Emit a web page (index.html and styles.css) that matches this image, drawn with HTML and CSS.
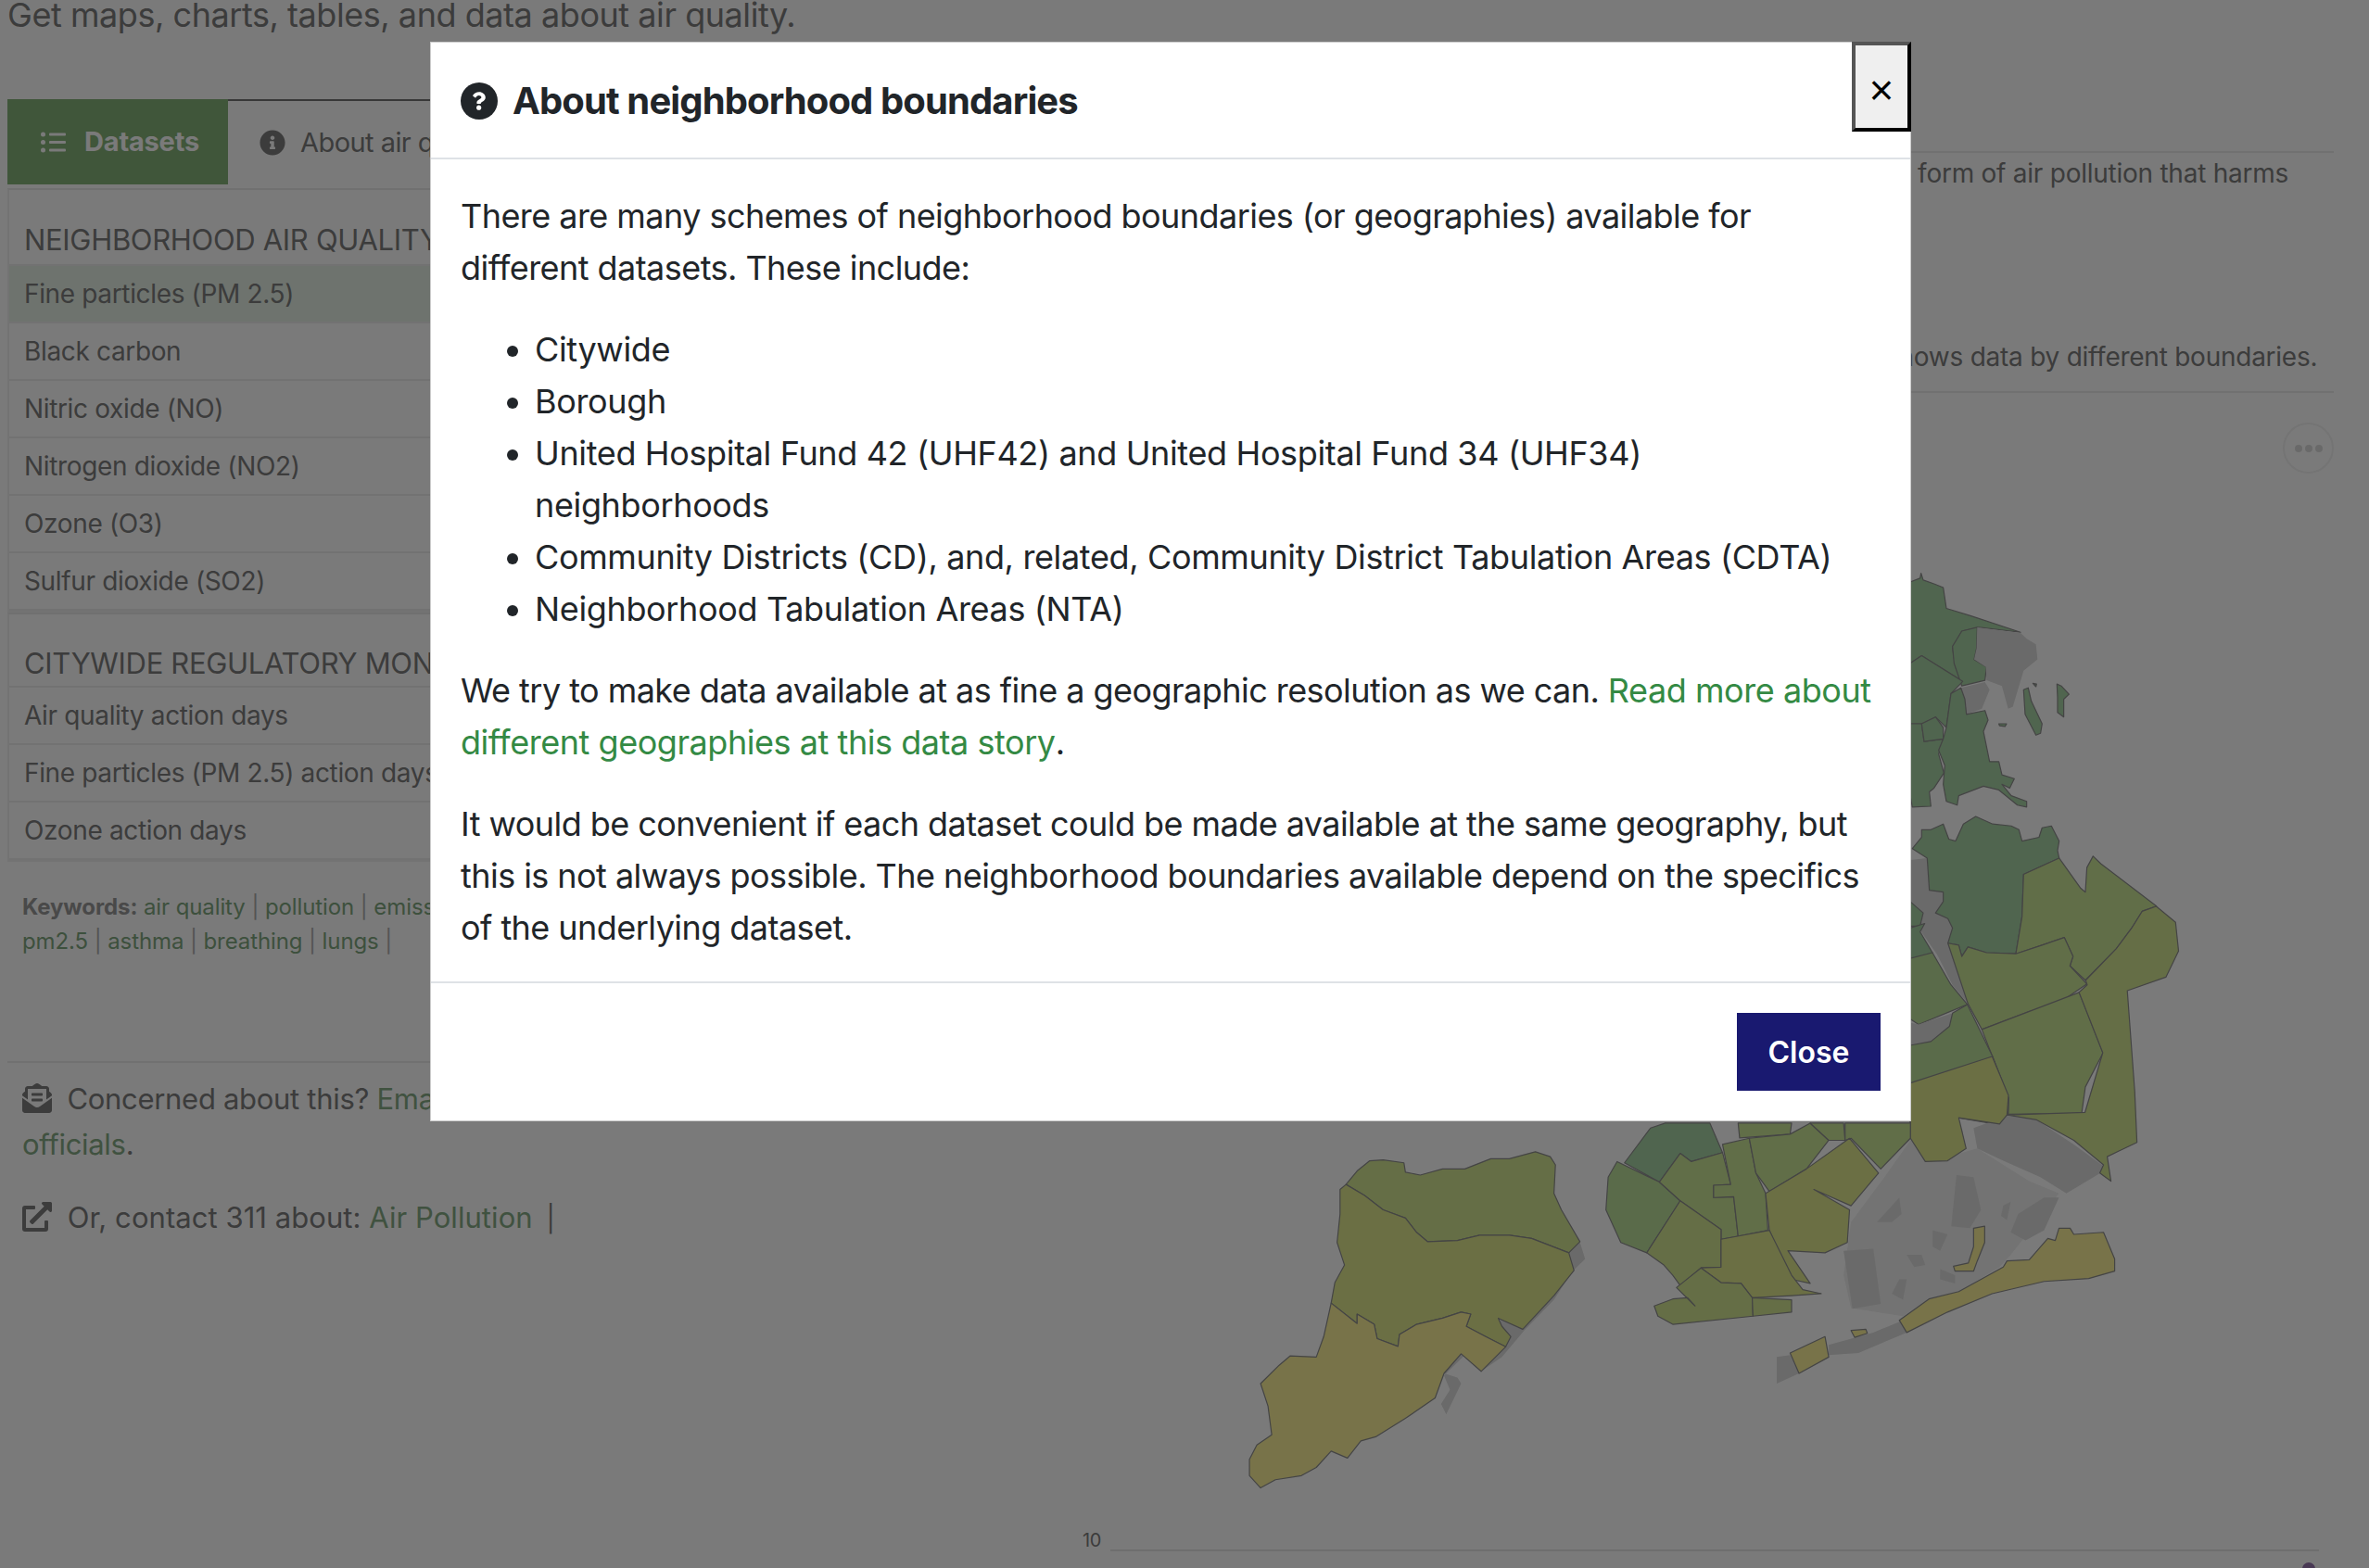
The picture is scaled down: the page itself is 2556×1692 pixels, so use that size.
FILE: index.html
```html
<!DOCTYPE html>
<html lang="en">
<head>
  <meta charset="UTF-8">
  <title>Air quality data</title>
  <link rel="stylesheet" href="styles.css">
</head>
<body>
  <div class="page">
    <p class="intro">Get maps, charts, tables, and data about air quality.</p>

    <div class="columns">
      <div class="side">
        <!-- tabs -->
        <div class="tabs">
          <div class="tab tab-active">
            <svg class="tab-list-icon" viewBox="0 0 27 23"><circle cx="2.5" cy="3" r="2.5"/><circle cx="2.5" cy="11.5" r="2.5"/><circle cx="2.5" cy="20" r="2.5"/><rect x="9" y="1.5" width="18" height="3" rx="1"/><rect x="9" y="10" width="18" height="3" rx="1"/><rect x="9" y="18.5" width="18" height="3" rx="1"/></svg>
            Datasets
          </div>
          <div class="tab">
            <svg class="tab-info-icon" viewBox="0 0 512 512"><path d="M256 8C119.043 8 8 119.083 8 256c0 136.997 111.043 248 248 248s248-111.003 248-248C504 119.083 392.957 8 256 8zm0 110c23.196 0 42 18.804 42 42s-18.804 42-42 42-42-18.804-42-42 18.804-42 42-42zm56 254c0 6.627-5.373 12-12 12h-88c-6.627 0-12-5.373-12-12v-24c0-6.627 5.373-12 12-12h12v-64h-12c-6.627 0-12-5.373-12-12v-24c0-6.627 5.373-12 12-12h64c6.627 0 12 5.373 12 12v100h12c6.627 0 12 5.373 12 12v24z"/></svg>
            About air quality
          </div>
        </div>

        <!-- dataset lists -->
        <div class="panel">
          <h5 class="panel-title">NEIGHBORHOOD AIR QUALITY</h5>
          <div class="row row-active">Fine particles (PM 2.5)</div>
          <div class="row">Black carbon</div>
          <div class="row">Nitric oxide (NO)</div>
          <div class="row">Nitrogen dioxide (NO2)</div>
          <div class="row">Ozone (O3)</div>
          <div class="row">Sulfur dioxide (SO2)</div>
        </div>
        <div class="panel panel-second">
          <h5 class="panel-title">CITYWIDE REGULATORY MONITORING</h5>
          <div class="row">Air quality action days</div>
          <div class="row">Fine particles (PM 2.5) action days</div>
          <div class="row">Ozone action days</div>
        </div>

        <p class="keywords"><b>Keywords:</b> <a>air quality</a> | <a>pollution</a> | <a>emissions</a><br><a>pm2.5</a> | <a>asthma</a> | <a>breathing</a> | <a>lungs</a> |</p>

        <hr class="side-rule">

        <p class="contact contact-first">
          <svg class="contact-icon" viewBox="0 0 512 512"><path d="M176 216h160c8.84 0 16-7.16 16-16v-16c0-8.84-7.16-16-16-16H176c-8.84 0-16 7.16-16 16v16c0 8.84 7.16 16 16 16zm-16 80c0 8.84 7.16 16 16 16h160c8.84 0 16-7.16 16-16v-16c0-8.84-7.16-16-16-16H176c-8.84 0-16 7.16-16 16v16zm96 121.13c-16.42 0-32.84-5.06-46.86-15.19L0 250.86V464c0 26.51 21.49 48 48 48h416c26.51 0 48-21.49 48-48V250.86L302.86 401.94c-14.02 10.12-30.44 15.19-46.86 15.19zm237.61-254.18c-8.85-6.94-17.24-13.47-29.61-22.81V96c0-26.51-21.49-48-48-48h-77.55c-3.04-2.2-5.87-4.26-9.04-6.56C312.6 29.17 279.2-.35 256 0c-23.2-.35-56.59 29.17-73.41 41.44-3.17 2.3-6 4.36-9.04 6.56H96c-26.51 0-48 21.49-48 48v44.14c-12.37 9.33-20.76 15.87-29.61 22.81A47.995 47.995 0 0 0 0 200.72v10.65l96 69.35V96h320v184.72l96-69.35v-10.65c0-14.74-6.78-28.67-18.39-37.77z"/></svg>
          Concerned about this? <a>Email your elected officials</a>.
        </p>
        <p class="contact contact-second">
          <svg class="contact-icon" viewBox="0 0 512 512"><path d="M432 320h-32a16 16 0 0 0-16 16v112H64V128h144a16 16 0 0 0 16-16V80a16 16 0 0 0-16-16H48a48 48 0 0 0-48 48v352a48 48 0 0 0 48 48h352a48 48 0 0 0 48-48V336a16 16 0 0 0-16-16zM488 0h-128c-21.37 0-32.05 25.91-17 41l35.73 35.73L135 320.37a24 24 0 0 0 0 34L157.67 377a24 24 0 0 0 34 0l243.61-243.68L471 169c15 15 41 4.5 41-17V24a24 24 0 0 0-24-24z"/></svg>
          Or, contact 311 about: <a>Air Pollution</a> <span class="contact-bar">|</span>
        </p>
      </div>

      <div class="main">
        <hr class="main-rule">
        <p class="blurb blurb-first">a form of air pollution that harms</p>
        <p class="blurb blurb-second">shows data by different boundaries.</p>
        <hr class="main-rule">
        <div class="more"><span></span><span></span><span></span></div>

        <!-- map, coordinates are page pixels -->
        <svg class="chart" viewBox="1160 560 1360 1132">
          <g class="boroughs" transform="translate(1950 580) scale(.3333 .4082)">
            <path class="c1" d="M333 115L365 105 368 92 375 110 410 120 440 130 450 185 530 205 690 248 555 235 500 245 470 290 480 340 503 378 370 310 333 330Z"/>
            <path class="c1" d="M550 235L548 290 540 320 580 340 575 375 500 390 475 330 470 285 500 245Z"/>
            <path class="w1" d="M550 235L690 250 710 265 740 280 745 320 700 350 665 445 650 450 630 390 580 375 578 340 540 320 548 290Z"/>
            <path class="w1" d="M497 395L575 380 590 400 565 450 515 465 510 425Z"/>
            <path class="c1" d="M333 330L370 310 503 378 465 410 450 500 415 472 370 490 333 490Z"/>
            <path class="c1" d="M333 490L370 490 378 537 440 530 425 570 442 620 410 660 395 670 400 708 340 710 333 680Z"/>
            <path class="c1" d="M370 490L415 472 440 500 440 530 378 537Z"/>
            <path class="c1" d="M497 395L510 425 515 465 575 455 585 480 570 510 590 590 620 590 630 625 670 635 655 660 630 650 660 680 710 695 710 710 680 705 620 665 570 655 490 680 485 705 450 695 440 650 445 600 425 560 440 530 450 500 465 410Z"/>
            <path class="c1" d="M700 400L715 395 725 430 760 490 755 515 740 520 705 465Z"/>
            <path class="c1" d="M808 385L822 390 847 412 830 425 830 472 810 460 810 420Z"/>
            <path class="c1" d="M620 490L645 490 640 497 622 495Z"/>
            <path class="c1" d="M730 383L742 385 740 392Z"/>

            <path class="w1" d="M333 850L388 845 395 930 440 935 440 960 415 990 455 1005 470 1030 455 1070 520 1230 470 1180 420 1100 365 1035 375 990 333 960Z"/>
            <path class="c1" d="M340 820L370 790 370 770 400 770 440 755 458 795 480 800 505 755 545 735 600 755 660 760 685 770 695 800 750 790 760 765 790 760 815 800 810 825 815 845 700 888 695 1000 675 1098 580 1095 520 1080 500 1105 490 1075 455 1070 470 1030 455 1005 415 990 440 960 440 935 395 930 388 845Z"/>
            <path class="c3" d="M700 888L815 845 885 925 900 935 905 870 925 840 950 860 1130 972 1085 985 1050 1030 1000 1085 900 1168 850 1130 860 1105 832 1055 760 1075 675 1098 695 1000Z"/>
            <path class="c3" d="M455 1070L490 1075 500 1105 520 1080 580 1095 675 1098 760 1075 832 1055 860 1105 850 1130 905 1178 820 1225 720 1250 565 1298 520 1230Z"/>
            <path class="c3" d="M565 1298L880 1200 957 1360 900 1450 888 1520 650 1522 652 1480Z"/>
            <path class="c1" d="M333 960L375 990 365 1025 333 1025Z"/>
            <path class="c1" d="M333 1030L380 1018 365 1040 405 1095 333 1115Z"/>
            <path class="c2" d="M333 1110L405 1095 465 1180 518 1232 360 1285 333 1270Z"/>
            <path class="w1" d="M333 1280L360 1285 470 1255 460 1290 400 1330 333 1340Z"/>
            <path class="c2" d="M333 1340L400 1330 460 1290 470 1255 518 1232 600 1370 360 1442 333 1440Z"/>
            <path class="c5" d="M333 1442L360 1442 600 1370 652 1480 650 1522 620 1550 480 1530 500 1568 333 1568Z"/>
          </g>

          <g class="boroughs" transform="translate(1300 1000) scale(.8013 .4413)">
            <!-- water -->
            <path class="w2" d="M870 720L915 610 950 520 1000 560 1040 540 1110 620 1150 650 1120 720 1085 800 1070 830 1015 890 975 908 940 950 870 930 860 850Z"/>
            <path class="w1" d="M1035 490L1080 460 1120 470 1170 530 1215 590 1160 650 1125 610 1075 570 1040 540Z"/>
            <path class="w1" d="M860 790L900 785 910 920 872 932Z"/>
            <path class="w1" d="M935 660L905 720 925 720 938 700Z"/>
            <path class="w1" d="M1012 605L1035 610 1045 690 1030 735 1005 730Z"/>
            <path class="w1" d="M1095 700L1130 660 1150 660 1130 740 1105 765 1085 745Z"/>
            <path class="w1" d="M1075 680L1085 670 1080 715 1072 705Z"/>
            <path class="w1" d="M945 800L965 800 970 825 955 830Z"/>
            <path class="w1" d="M990 835L1010 850 1010 870 990 860Z"/>
            <path class="w1" d="M935 860L945 860 940 910 925 895Z"/>
            <path class="w1" d="M980 740L1000 750 990 790 980 780Z"/>
            <path class="w1" d="M940 960L945 990 880 1040 840 1045 840 1020 900 990Z"/>
            <path class="w1" d="M770 1050L788 1045 800 1090 770 1115Z"/>
            <path class="w1" d="M490 795L505 770 512 810 495 840 470 910 430 985 400 1050 372 1085 345 1042 322 1090 340 1100 345 1115 325 1190 318 1165 330 1130 322 1095Z"/>

            <!-- queens, east and south of the dialog -->
            <path class="c5" d="M950 380L1060 315 1082 410 1080 458 1070 480 1015 465 1025 540 1000 570 970 572 950 515Z"/>
            <path class="c4" d="M1281 -52L1307 -13 1311 57 1294 121 1242 154 1252 400 1255 525 1215 560 1220 620 1205 600 1210 580 1170 520 1120 470 1080 458 1185 452 1209 306 1177 158 1188 140 1186 129 1227 52 1248 1 1262 -40Z"/>

            <!-- brooklyn -->
            <path class="c1" d="M565 575L600 490 620 478 680 478 697 550 655 572 640 552 612 622Z"/>
            <path class="c2" d="M555 572L612 622 640 668 595 795 560 770 540 690 543 610Z"/>
            <path class="c3" d="M612 622L640 552 655 572 697 550 708 628 685 630 685 660 712 658 718 755 695 762 695 738 640 668Z"/>
            <path class="c3" d="M697 530L733 515 742 600 755 650 758 740 718 755 712 658 685 660 685 630 708 628Z"/>
            <path class="c4" d="M640 668L695 738 695 830 668 832 640 875 630 850 618 825 595 795Z"/>
            <path class="c3" d="M718 478L790 478 788 505 720 514Z"/>
            <path class="c3" d="M733 515L788 505 815 478 840 520 810 590 760 645 742 600Z"/>
            <path class="c3" d="M815 478L860 478 862 520 840 520Z"/>
            <path class="c3" d="M862 478L950 478 950 515 910 590 870 515 862 520Z"/>
            <path class="c5" d="M868 515L907 600 870 680 820 640 868 690 865 770 835 795 785 790 815 870 790 860 783 840 760 740 755 650 810 590Z"/>
            <path class="c5" d="M695 762L760 740 790 850 805 885 830 895 790 900 737 905 722 870 695 868 668 832 695 830Z"/>
            <path class="c4" d="M668 832L695 868 722 870 737 905 738 950 630 970 610 950 605 925 630 908 650 905 660 925 635 880Z"/>
            <path class="c4" d="M737 905L790 910 790 940 738 950Z"/>

            <!-- rockaways -->
            <path class="c6" d="M935 960L975 908 1015 890 1075 830 1080 815 1110 812 1135 760 1145 765 1150 735 1165 735 1170 750 1210 745 1225 810 1225 840 1190 858 1130 865 1060 895 1000 940 945 990Z"/>
            <path class="c6" d="M1035 735L1050 730 1050 770 1040 815 1035 840 1010 840 1008 828 1028 820 1035 780Z"/>
            <path class="c6" d="M870 985L890 982 892 992 875 1002Z"/>
            <path class="c6" d="M788 1040L835 1000 840 1050 800 1090Z"/>

            <!-- staten island -->
            <path class="c4" d="M190 628L205 595 222 570 240 568 268 575 270 598 290 605 320 590 350 590 385 565 410 565 445 548 465 560 472 580 470 650 480 690 505 768 490 795 440 760 410 752 370 752 340 765 300 768 285 745 270 710 240 690 215 655Z"/>
            <path class="c5" d="M190 628L215 655 240 690 270 710 285 745 300 768 340 765 370 752 410 752 440 760 490 795 497 838 470 900 428 982 395 955 400 975 412 1000 405 1025 378 1000 352 975 358 945 345 940 320 955 285 970 262 995 260 1024 232 1005 228 970 205 945 205 968 170 918 175 868 188 825 178 770 182 700 182 640Z"/>
            <path class="c6" d="M170 918L205 968 205 945 228 970 232 1005 260 1024 262 995 285 970 320 955 345 940 358 945 352 975 378 1000 405 1025 372 1085 345 1042 322 1090 310 1150 270 1200 230 1245 210 1255 192 1297 170 1280 150 1320 130 1340 95 1350 75 1370 60 1340 60 1300 70 1265 90 1240 85 1170 75 1115 100 1070 115 1047 150 1050 160 1000Z"/>
          </g>

          <text class="axis-label" x="1168" y="1668">10</text>
          <line class="axis" x1="1198" y1="1672" x2="2502" y2="1672"/>
          <circle class="axis-dot" cx="2491" cy="1692" r="7"/>
        </svg>
      </div>
    </div>
  </div>

  <div class="backdrop"></div>

  <div class="modal">
    <button class="modal-x" type="button">×</button>
    <div class="modal-header">
      <svg class="modal-icon" viewBox="8 8 496 496"><circle cx="256" cy="256" r="248"/><path class="modal-icon-mark" transform="translate(256 256) scale(.72) translate(-262 -260)" d="M262.655 90c-54.497 0-89.255 22.957-116.549 63.758-3.536 5.286-2.353 12.415 2.715 16.258l34.699 26.31c5.205 3.947 12.621 3.008 16.665-2.122 17.864-22.658 30.113-35.797 57.303-35.797 20.429 0 45.698 13.148 45.698 32.958 0 14.976-12.363 22.667-32.534 33.976C247.128 238.528 216 254.941 216 296v4c0 6.627 5.373 12 12 12h56c6.627 0 12-5.373 12-12v-1.333c0-28.462 83.186-29.647 83.186-106.667 0-58.002-60.165-102-116.531-102zM256 338c-25.365 0-46 20.635-46 46 0 25.364 20.635 46 46 46s46-20.636 46-46c0-25.365-20.635-46-46-46z"/></svg>
      <h4 class="modal-title">About neighborhood boundaries</h4>
    </div>
    <div class="modal-body">
      <p>There are many schemes of neighborhood boundaries (or geographies) available for different datasets. These include:</p>
      <ul>
        <li>Citywide</li>
        <li>Borough</li>
        <li>United Hospital Fund 42 (UHF42) and United Hospital Fund 34 (UHF34) neighborhoods</li>
        <li>Community Districts (CD), and, related, Community District Tabulation Areas (CDTA)</li>
        <li>Neighborhood Tabulation Areas (NTA)</li>
      </ul>
      <p>We try to make data available at as fine a geographic resolution as we can. <a>Read more about different geographies at this data story</a>.</p>
      <p>It would be convenient if each dataset could be made available at the same geography, but this is not always possible. The neighborhood boundaries available depend on the specifics of the underlying dataset.</p>
    </div>
    <div class="modal-footer">
      <button class="close-btn" type="button">Close</button>
    </div>
  </div>
</body>
</html>
```

FILE: styles.css
```css
html, body {
  height: 100%;
}

body {
  margin: 0;
  overflow: hidden;
  background-color: #fff;
  color: #7d7d7d;
  font-family: 'Inter', 'Liberation Sans', sans-serif;
  font-size: 36px;
  letter-spacing: -.32px;
  line-height: 56px;
}

p, h4, h5 {
  margin: 0;
  font-weight: normal;
}

.page {
  padding: 0 38px 0 8px;
  margin-top: -12px;
}

.intro {
  letter-spacing: -.45px;
}

.columns {
  display: grid;
  grid-template-columns: 800px 1fr;
}

/* tabs */
.tabs {
  display: flex;
  margin-top: 63px;
  width: 1200px;
  height: 92px;
  border-top: 2px solid #767676;
  box-sizing: border-box;
}

.tab {
  display: flex;
  align-items: center;
  gap: 16px;
  padding: 0 34px;
  font-size: 29px;
  letter-spacing: -.55px;
  line-height: 40px;
  white-space: nowrap;
  fill: #7d7d7d;
}

.tab-active {
  margin-top: -2px;
  gap: 20px;
  width: 238px;
  box-sizing: border-box;
  padding: 0 0 0 36px;
  background-color: #87b579;
  color: #ffffff;
  font-weight: 700;
  fill: #ffffff;
  letter-spacing: -.2px;
}

.tab-list-icon {
  width: 27px;
  height: 23px;
}

.tab-info-icon {
  width: 28px;
  height: 28px;
}

/* dataset lists */
.panel {
  width: 1200px;
  margin-top: 4px;
  border: 2px solid #f0f0f0;
  border-top-color: #eaeaea;
  box-sizing: border-box;
}

.panel + .panel {
  margin-top: 0;
}

.panel-title {
  height: 82px;
  box-sizing: border-box;
  padding: 34px 0 0 16px;
  font-size: 31px;
  line-height: 40px;
  white-space: nowrap;
  border-bottom: 2px solid #eeeeee;
}

.panel-second .panel-title {
  height: 79px;
  padding-top: 33px;
}

.row {
  height: 62px;
  box-sizing: border-box;
  padding-left: 16px;
  font-size: 28px;
  letter-spacing: -.35px;
  line-height: 60px;
  border-bottom: 2px solid #eeeeee;
  white-space: nowrap;
}

.row-active {
  background-color: #e6f0e6;
}

.keywords {
  margin-top: 30px;
  padding-left: 16px;
  width: 1000px;
  font-size: 24px;
  letter-spacing: -.1px;
  line-height: 37px;
  color: #b0b0b0;
}

.keywords b {
  color: #999;
}

.keywords a {
  color: #7fa87f;
}

.side-rule {
  width: 1000px;
  margin: 111px 0 0;
  border: 0;
  border-top: 2px solid #ececec;
}

.contact {
  width: 700px;
  padding-left: 16px;
  font-size: 31px;
  letter-spacing: -.3px;
  line-height: 49px;
  fill: #7d7d7d;
}

.contact a {
  color: #86ab86;
}

.contact-first {
  margin-top: 14px;
}

.contact-second {
  margin-top: 30px;
  letter-spacing: .06px;
}

.contact-icon {
  width: 32px;
  height: 32px;
  margin-right: 8px;
  vertical-align: -4px;
}

.contact-bar {
  margin-left: 6px;
  font-size: 28px;
}

/* right side */
.main-rule {
  margin: 119px 0 0;
  border: 0;
  border-top: 2px solid #ececec;
}

.blurb {
  font-size: 28px;
  letter-spacing: -.25px;
  line-height: 44px;
  white-space: nowrap;
}

.blurb-first {
  padding-left: 1238px;
}

.blurb-second {
  margin-top: 154px;
  padding-left: 1226px;
}

.blurb-second + .main-rule {
  margin-top: 15px;
}

.more {
  display: flex;
  align-items: center;
  justify-content: center;
  gap: 3px;
  width: 55px;
  height: 55px;
  margin: 32px 0 0 auto;
  box-sizing: border-box;
  border: 2px solid #f2f2f2;
  border-radius: 50%;
}

.more span {
  width: 8px;
  height: 8px;
  border-radius: 50%;
  background-color: #dcdcdc;
}

.chart {
  display: block;
  width: 1360px;
  height: 1132px;
  margin: 50px -2px 0 auto;
}

.boroughs path {
  stroke: #8e8e8e;
  stroke-width: 1.2px;
  vector-effect: non-scaling-stroke;
  stroke-linejoin: round;
}

.boroughs .w1 { fill: #dddddd; stroke: none; }
.boroughs .w2 { fill: #f0f0f0; stroke: none; }
.c1 { fill: #a7d3a5; }
.c2 { fill: #bcdf9c; }
.c3 { fill: #cbe597; }
.c4 { fill: #d4e792; }
.c5 { fill: #dfe98e; }
.c6 { fill: #faf09a; }

.axis-label {
  font-size: 20px;
  fill: #7d7d7d;
}

.axis {
  stroke: #e6e6e6;
  stroke-width: 2;
}

.axis-dot {
  fill: #9a78b0;
}

/* dialog */
.backdrop {
  position: fixed;
  top: 0;
  left: 0;
  right: 0;
  bottom: 0;
  background-color: rgba(0, 0, 0, .52);
}

.modal {
  position: fixed;
  top: 45px;
  left: 464px;
  width: 1598px;
  box-sizing: border-box;
  background-color: #fff;
  border: 1px solid rgba(0, 0, 0, .2);
  color: #212529;
}

.modal a {
  color: #348a44;
  letter-spacing: -.45px;
}

.modal-x {
  position: absolute;
  top: -1px;
  right: -1px;
  width: 64px;
  height: 97px;
  padding: 6px 0 0;
  background-color: #efefef;
  border: 4px outset #000;
  border-color: #555 #000 #000 #555;
  color: #000;
  font-family: 'Liberation Sans', sans-serif;
  font-size: 46px;
  line-height: 1;
}

.modal-header {
  display: flex;
  align-items: center;
  gap: 16px;
  height: 126px;
  box-sizing: border-box;
  padding: 2px 0 0 32px;
  border-bottom: 2px solid #dee2e6;
}

.modal-icon {
  width: 40px;
  height: 40px;
  fill: #212529;
}

.modal-icon-mark {
  fill: #fff;
}

.modal-title {
  font-size: 40px;
  font-weight: 700;
  line-height: 48px;
  letter-spacing: -.88px;
}

.modal-body {
  padding: 33px 32px 0;
}

.modal-body p,
.modal-body ul {
  margin: 0 0 32px;
}

.modal-body p {
  letter-spacing: -.55px;
}

.modal-body p:last-child {
  margin-bottom: 30px;
}

.modal-body ul {
  padding: 0 40px 0 80px;
  letter-spacing: -.36px;
}

.modal-footer {
  display: flex;
  justify-content: flex-end;
  padding: 32px;
  border-top: 2px solid #dee2e6;
}

.close-btn {
  width: 155px;
  height: 84px;
  padding: 0;
  border: 0;
  background-color: #191970;
  color: #fff;
  font-family: 'Inter', 'Liberation Sans', sans-serif;
  font-size: 32px;
  font-weight: 600;
}
```
